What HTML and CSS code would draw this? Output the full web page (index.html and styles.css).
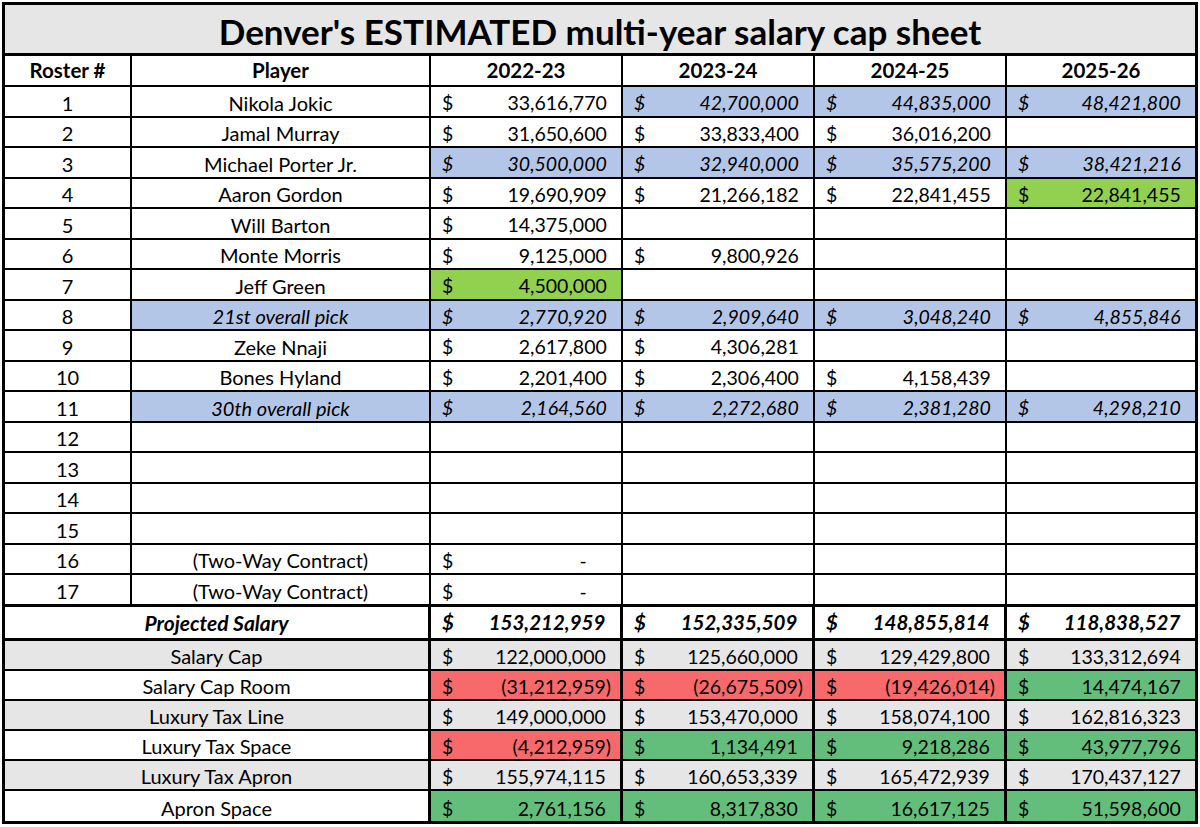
FILE: index.html
```html
<!DOCTYPE html>
<html lang="en">
<head>
<meta charset="utf-8">
<title>Denver's ESTIMATED multi-year salary cap sheet</title>
<link rel="stylesheet" href="styles.css">
</head>
<body>
<div class="sheet">
  <div class="c title">Denver's ESTIMATED multi-year salary cap sheet</div>

  <div class="c hd">Roster #</div>
  <div class="c hd">Player</div>
  <div class="c hd">2022-23</div>
  <div class="c hd">2023-24</div>
  <div class="c hd">2024-25</div>
  <div class="c hd last">2025-26</div>

  <div class="c num">1</div>
  <div class="c name">Nikola Jokic</div>
  <div class="c m"><span>$</span><span>33,616,770<i class="p">)</i></span></div>
  <div class="c m blue"><span>$</span><span>42,700,000<i class="p">)</i></span></div>
  <div class="c m blue"><span>$</span><span>44,835,000<i class="p">)</i></span></div>
  <div class="c m blue last"><span>$</span><span>48,421,800<i class="p">)</i></span></div>

  <div class="c num">2</div>
  <div class="c name">Jamal Murray</div>
  <div class="c m"><span>$</span><span>31,650,600<i class="p">)</i></span></div>
  <div class="c m"><span>$</span><span>33,833,400<i class="p">)</i></span></div>
  <div class="c m"><span>$</span><span>36,016,200<i class="p">)</i></span></div>
  <div class="c last"></div>

  <div class="c num">3</div>
  <div class="c name">Michael Porter Jr.</div>
  <div class="c m blue"><span>$</span><span>30,500,000<i class="p">)</i></span></div>
  <div class="c m blue"><span>$</span><span>32,940,000<i class="p">)</i></span></div>
  <div class="c m blue"><span>$</span><span>35,575,200<i class="p">)</i></span></div>
  <div class="c m blue last"><span>$</span><span>38,421,216<i class="p">)</i></span></div>

  <div class="c num">4</div>
  <div class="c name">Aaron Gordon</div>
  <div class="c m"><span>$</span><span>19,690,909<i class="p">)</i></span></div>
  <div class="c m"><span>$</span><span>21,266,182<i class="p">)</i></span></div>
  <div class="c m"><span>$</span><span>22,841,455<i class="p">)</i></span></div>
  <div class="c m lime last"><span>$</span><span>22,841,455<i class="p">)</i></span></div>

  <div class="c num">5</div>
  <div class="c name">Will Barton</div>
  <div class="c m"><span>$</span><span>14,375,000<i class="p">)</i></span></div>
  <div class="c"></div>
  <div class="c"></div>
  <div class="c last"></div>

  <div class="c num">6</div>
  <div class="c name">Monte Morris</div>
  <div class="c m"><span>$</span><span>9,125,000<i class="p">)</i></span></div>
  <div class="c m"><span>$</span><span>9,800,926<i class="p">)</i></span></div>
  <div class="c"></div>
  <div class="c last"></div>

  <div class="c num">7</div>
  <div class="c name">Jeff Green</div>
  <div class="c m lime"><span>$</span><span>4,500,000<i class="p">)</i></span></div>
  <div class="c"></div>
  <div class="c"></div>
  <div class="c last"></div>

  <div class="c num">8</div>
  <div class="c name blue">21st overall pick</div>
  <div class="c m blue"><span>$</span><span>2,770,920<i class="p">)</i></span></div>
  <div class="c m blue"><span>$</span><span>2,909,640<i class="p">)</i></span></div>
  <div class="c m blue"><span>$</span><span>3,048,240<i class="p">)</i></span></div>
  <div class="c m blue last"><span>$</span><span>4,855,846<i class="p">)</i></span></div>

  <div class="c num">9</div>
  <div class="c name">Zeke Nnaji</div>
  <div class="c m"><span>$</span><span>2,617,800<i class="p">)</i></span></div>
  <div class="c m"><span>$</span><span>4,306,281<i class="p">)</i></span></div>
  <div class="c"></div>
  <div class="c last"></div>

  <div class="c num">10</div>
  <div class="c name">Bones Hyland</div>
  <div class="c m"><span>$</span><span>2,201,400<i class="p">)</i></span></div>
  <div class="c m"><span>$</span><span>2,306,400<i class="p">)</i></span></div>
  <div class="c m"><span>$</span><span>4,158,439<i class="p">)</i></span></div>
  <div class="c last"></div>

  <div class="c num">11</div>
  <div class="c name blue">30th overall pick</div>
  <div class="c m blue"><span>$</span><span>2,164,560<i class="p">)</i></span></div>
  <div class="c m blue"><span>$</span><span>2,272,680<i class="p">)</i></span></div>
  <div class="c m blue"><span>$</span><span>2,381,280<i class="p">)</i></span></div>
  <div class="c m blue last"><span>$</span><span>4,298,210<i class="p">)</i></span></div>

  <div class="c num">12</div>
  <div class="c name"></div>
  <div class="c"></div>
  <div class="c"></div>
  <div class="c"></div>
  <div class="c last"></div>

  <div class="c num">13</div>
  <div class="c name"></div>
  <div class="c"></div>
  <div class="c"></div>
  <div class="c"></div>
  <div class="c last"></div>

  <div class="c num">14</div>
  <div class="c name"></div>
  <div class="c"></div>
  <div class="c"></div>
  <div class="c"></div>
  <div class="c last"></div>

  <div class="c num">15</div>
  <div class="c name"></div>
  <div class="c"></div>
  <div class="c"></div>
  <div class="c"></div>
  <div class="c last"></div>

  <div class="c num">16</div>
  <div class="c name">(Two-Way Contract)</div>
  <div class="c m"><span>$</span><span class="dash">-<i class="p">)</i></span></div>
  <div class="c"></div>
  <div class="c"></div>
  <div class="c last"></div>

  <div class="c num endbody">17</div>
  <div class="c name endbody">(Two-Way Contract)</div>
  <div class="c m endbody"><span>$</span><span class="dash">-<i class="p">)</i></span></div>
  <div class="c endbody"></div>
  <div class="c endbody"></div>
  <div class="c endbody last"></div>

  <div class="c lbl proj">Projected Salary</div>
  <div class="c m ft proj"><span>$</span><span>153,212,959<i class="p">)</i></span></div>
  <div class="c m ft proj"><span>$</span><span>152,335,509<i class="p">)</i></span></div>
  <div class="c m ft proj"><span>$</span><span>148,855,814<i class="p">)</i></span></div>
  <div class="c m ft proj"><span>$</span><span>118,838,527<i class="p">)</i></span></div>

  <div class="c lbl gray">Salary Cap</div>
  <div class="c m ft gray"><span>$</span><span>122,000,000<i class="p">)</i></span></div>
  <div class="c m ft gray"><span>$</span><span>125,660,000<i class="p">)</i></span></div>
  <div class="c m ft gray"><span>$</span><span>129,429,800<i class="p">)</i></span></div>
  <div class="c m ft gray"><span>$</span><span>133,312,694<i class="p">)</i></span></div>

  <div class="c lbl">Salary Cap Room</div>
  <div class="c m ft red"><span>$</span><span>(31,212,959)</span></div>
  <div class="c m ft red"><span>$</span><span>(26,675,509)</span></div>
  <div class="c m ft red"><span>$</span><span>(19,426,014)</span></div>
  <div class="c m ft green"><span>$</span><span>14,474,167<i class="p">)</i></span></div>

  <div class="c lbl gray">Luxury Tax Line</div>
  <div class="c m ft gray"><span>$</span><span>149,000,000<i class="p">)</i></span></div>
  <div class="c m ft gray"><span>$</span><span>153,470,000<i class="p">)</i></span></div>
  <div class="c m ft gray"><span>$</span><span>158,074,100<i class="p">)</i></span></div>
  <div class="c m ft gray"><span>$</span><span>162,816,323<i class="p">)</i></span></div>

  <div class="c lbl">Luxury Tax Space</div>
  <div class="c m ft red"><span>$</span><span>(4,212,959)</span></div>
  <div class="c m ft green"><span>$</span><span>1,134,491<i class="p">)</i></span></div>
  <div class="c m ft green"><span>$</span><span>9,218,286<i class="p">)</i></span></div>
  <div class="c m ft green"><span>$</span><span>43,977,796<i class="p">)</i></span></div>

  <div class="c lbl gray">Luxury Tax Apron</div>
  <div class="c m ft gray"><span>$</span><span>155,974,115<i class="p">)</i></span></div>
  <div class="c m ft gray"><span>$</span><span>160,653,339<i class="p">)</i></span></div>
  <div class="c m ft gray"><span>$</span><span>165,472,939<i class="p">)</i></span></div>
  <div class="c m ft gray"><span>$</span><span>170,437,127<i class="p">)</i></span></div>

  <div class="c lbl endsheet">Apron Space</div>
  <div class="c m ft green endsheet"><span>$</span><span>2,761,156<i class="p">)</i></span></div>
  <div class="c m ft green endsheet"><span>$</span><span>8,317,830<i class="p">)</i></span></div>
  <div class="c m ft green endsheet"><span>$</span><span>16,617,125<i class="p">)</i></span></div>
  <div class="c m ft green endsheet"><span>$</span><span>51,598,600<i class="p">)</i></span></div>
</div>
</body>
</html>
```

FILE: styles.css
```css
html, body {
  margin: 0;
  padding: 0;
  background: #ffffff;
}

body {
  padding: 2px 0 0 2px;
  font-family: Lato, "Liberation Sans", sans-serif;
  font-size: 20px;
  color: #000;
}

.sheet {
  display: grid;
  width: 1196px;
  box-sizing: border-box;
  grid-template-columns: 127px 299px 192px 192px 192px 191px;
  grid-template-rows: 51px 31px repeat(16, 30.5px) 32px 34px repeat(5, 30px) 33px;
  border-left: 3px solid #000;
  border-top: 3px solid #000;
}

.c {
  box-sizing: border-box;
  border-right: 2px solid #000;
  border-bottom: 2px solid #000;
  display: flex;
  align-items: flex-end;
  justify-content: center;
  padding: 0 0 1px 0;
  line-height: 1.15;
  white-space: nowrap;
  overflow: hidden;
}

.last {
  border-right-width: 3px;
}

.title {
  grid-column: 1 / -1;
  background: #e7e6e6;
  border-bottom-width: 3px;
  border-right-width: 3px;
  font-size: 35px;
  font-weight: 700;
  padding-bottom: 2px;
}

.hd {
  font-weight: 700;
  font-size: 20.5px;
  padding-bottom: 2px;
}

.m {
  justify-content: space-between;
  padding-left: 11px;
  padding-right: 9px;
  font-size: 19.5px;
}

.p {
  visibility: hidden;
  font-style: normal;
}

.dash {
  padding-right: 20px;
}

.blue {
  background: #b4c6e7;
  font-style: italic;
}

.lime {
  background: #92d050;
}

.endbody {
  border-bottom-width: 3px;
}

.lbl {
  grid-column: span 2;
  border-right-width: 3px;
}

.ft {
  border-right-width: 3px;
}

.proj {
  font-weight: 700;
  font-style: italic;
  font-size: 21px;
  border-bottom-width: 3px;
  padding-bottom: 3px;
}

.m.proj {
  font-size: 20.5px;
}

.gray {
  background: #e7e6e6;
}

.red {
  background: #f8696b;
}

.green {
  background: #63be7b;
}

.endsheet {
  border-bottom-width: 3px;
}
```
